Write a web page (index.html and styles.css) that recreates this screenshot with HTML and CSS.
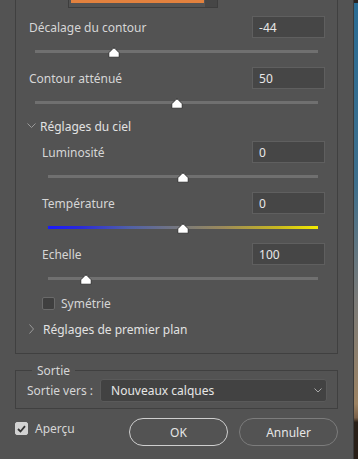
FILE: index.html
```html
<!DOCTYPE html>
<html lang="fr">
<head>
    <meta charset="UTF-8">
    <meta name="viewport" content="width=device-width, initial-scale=1.0">
    <title>Remplacement du ciel</title>
    <link rel="stylesheet" href="styles.css">
</head>
<body>
    <div class="page">
        <div class="main">
            <div class="settings">
                <div class="preview">
                    <div class="swatch"></div>
                    <div class="scroll"></div>
                </div>

                <div class="row">
                    <span>Décalage du contour</span>
                    <input type="text" class="field" value="-44">
                </div>
                <div class="slider">
                    <div class="track"></div>
                    <svg class="thumb" style="left: 28%" width="12" height="11" viewBox="0 0 12 11"><path d="M5.1 1.4 Q6 0.5 6.9 1.4 L11.2 5.8 L11.2 10.2 L0.8 10.2 L0.8 5.8 Z" fill="#fff" stroke="#222" stroke-width="0.8"/></svg>
                </div>

                <div class="row">
                    <span>Contour atténué</span>
                    <input type="text" class="field" value="50">
                </div>
                <div class="slider">
                    <div class="track"></div>
                    <svg class="thumb" style="left: 50%" width="12" height="11" viewBox="0 0 12 11"><path d="M5.1 1.4 Q6 0.5 6.9 1.4 L11.2 5.8 L11.2 10.2 L0.8 10.2 L0.8 5.8 Z" fill="#fff" stroke="#222" stroke-width="0.8"/></svg>
                </div>

                <div class="section-title">
                    <svg width="9" height="6" viewBox="0 0 9 6"><polyline points="0.5,0.5 4.5,4.5 8.5,0.5" fill="none" stroke="#9a9a9a" stroke-width="1"/></svg>
                    <span>Réglages du ciel</span>
                </div>

                <div class="sub">
                    <div class="row">
                        <span>Luminosité</span>
                        <input type="text" class="field" value="0">
                    </div>
                    <div class="slider">
                        <div class="track"></div>
                        <svg class="thumb" style="left: 50%" width="12" height="11" viewBox="0 0 12 11"><path d="M5.1 1.4 Q6 0.5 6.9 1.4 L11.2 5.8 L11.2 10.2 L0.8 10.2 L0.8 5.8 Z" fill="#fff" stroke="#222" stroke-width="0.8"/></svg>
                    </div>

                    <div class="row">
                        <span>Température</span>
                        <input type="text" class="field" value="0">
                    </div>
                    <div class="slider">
                        <div class="track temp"></div>
                        <svg class="thumb" style="left: 50%" width="12" height="11" viewBox="0 0 12 11"><path d="M5.1 1.4 Q6 0.5 6.9 1.4 L11.2 5.8 L11.2 10.2 L0.8 10.2 L0.8 5.8 Z" fill="#fff" stroke="#222" stroke-width="0.8"/></svg>
                    </div>

                    <div class="row">
                        <span>Echelle</span>
                        <input type="text" class="field" value="100">
                    </div>
                    <div class="slider">
                        <div class="track"></div>
                        <svg class="thumb" style="left: 14%" width="12" height="11" viewBox="0 0 12 11"><path d="M5.1 1.4 Q6 0.5 6.9 1.4 L11.2 5.8 L11.2 10.2 L0.8 10.2 L0.8 5.8 Z" fill="#fff" stroke="#222" stroke-width="0.8"/></svg>
                    </div>

                    <label class="check">
                        <span class="box"></span>
                        <span>Symétrie</span>
                    </label>
                </div>

                <div class="section-title closed">
                    <svg width="6" height="10" viewBox="0 0 6 10"><polyline points="0.5,0.5 4.5,5 0.5,9.5" fill="none" stroke="#9a9a9a" stroke-width="1"/></svg>
                    <span>Réglages de premier plan</span>
                </div>
            </div>

            <fieldset class="output">
                <legend>Sortie</legend>
                <div class="output-row">
                    <span class="output-label">Sortie vers :</span>
                    <div class="select">
                        <span>Nouveaux calques</span>
                        <svg width="8" height="5" viewBox="0 0 8 5"><polyline points="0.5,0.5 4,4 7.5,0.5" fill="none" stroke="#a8a8a8" stroke-width="1"/></svg>
                    </div>
                </div>
            </fieldset>

            <div class="footer">
                <label class="check preview-check">
                    <span class="box checked">
                        <svg width="9" height="8" viewBox="0 0 9 8"><polyline points="1,4 3.5,6.5 8,1.2" fill="none" stroke="#333" stroke-width="1.8"/></svg>
                    </span>
                    <span>Aperçu</span>
                </label>
                <div class="buttons">
                    <button class="btn primary">OK</button>
                    <button class="btn">Annuler</button>
                </div>
            </div>
        </div>
        <div class="edge"></div>
    </div>
</body>
</html>
```

FILE: styles.css
```css
body {
    margin: 0;
    background: #535353;
    font-family: "Noto Sans", "Open Sans", sans-serif;
    font-size: 12px;
    color: #d6d6d6;
    overflow: hidden;
}
.page {
    display: flex;
    height: 459px;
}
.main {
    width: 324px;
    padding: 0 15px;
}
.edge {
    width: 4px;
    border-left: 1px solid #3a3a3a;
    background: linear-gradient(to bottom, #2a2320 0, #2a2320 3px, #2a6c94 3px, #3e6f8c 40%, #7a7a78 65%, #9c8262 88%, #7a6048 91%, #2a2018 92%, #2a2018 100%);
}
.settings {
    height: 353px;
    border: 1px solid #404040;
    border-top: none;
    padding: 0 12px 0 13px;
}
.preview {
    display: flex;
    justify-content: space-between;
    width: 148px;
    height: 7px;
    margin-left: 39px;
    margin-bottom: 8px;
    border: 1px solid #3d3d3d;
    border-top: none;
}
.swatch {
    width: 133px;
    height: 3px;
    margin-left: 2px;
    background: #e2813e;
}
.scroll {
    width: 12px;
    background: #464646;
}
.row {
    display: flex;
    justify-content: space-between;
    align-items: center;
    height: 22px;
}
.field {
    box-sizing: border-box;
    width: 73px;
    height: 22px;
    margin: 0;
    padding: 0 6px;
    background: #464646;
    border: 1px solid #5f5f5f;
    color: #e8e8e8;
    font-family: inherit;
    font-size: 12px;
    outline: none;
}
.slider {
    position: relative;
    height: 29px;
    margin: 0 7px 0 6px;
}
.track {
    position: absolute;
    left: 0;
    right: 0;
    top: 12px;
    height: 3px;
    background: #707070;
}
.track.temp {
    background: linear-gradient(to right, #1a1aff 0, #2a2ad8 12%, #5060a8 30%, #7a7a7a 50%, #9c8a5a 65%, #c8b820 85%, #f4ec00 100%);
}
.thumb {
    position: absolute;
    top: 9px;
    margin-left: -6px;
}
.section-title {
    display: flex;
    align-items: center;
    height: 16px;
    margin-bottom: 7px;
    color: #e2e2e2;
}
.section-title svg {
    margin: 0 4px 0 -2px;
}
.section-title.closed {
    margin-top: 8px;
    margin-bottom: 0;
}
.section-title.closed svg {
    margin: 0 8px 0 0;
}
.sub {
    padding-left: 13px;
}
.check {
    display: flex;
    align-items: center;
    height: 19px;
}
.box {
    box-sizing: border-box;
    width: 13px;
    height: 13px;
    margin-right: 6px;
    border: 1px solid #6a6a6a;
    border-radius: 2px;
    background: #3f3f3f;
}
.box.checked {
    display: flex;
    align-items: center;
    justify-content: center;
    background: #d2d2d2;
    border-color: #d2d2d2;
    margin-right: 7px;
}
.output {
    margin: 8px 0 0;
    padding: 0 10px 6px 11px;
    border: 1px solid #404040;
    min-width: 0;
}
.output legend {
    margin-left: 5px;
    padding: 0 5px;
    color: #d6d6d6;
}
.output-row {
    display: flex;
    align-items: center;
    gap: 7px;
}
.select {
    flex: 1;
    display: flex;
    justify-content: space-between;
    align-items: center;
    box-sizing: border-box;
    height: 23px;
    padding: 0 4px 0 10px;
    background: #424242;
    border: 1px solid #5a5a5a;
    border-radius: 3px;
    color: #e6e6e6;
}
.footer {
    display: flex;
    justify-content: space-between;
    margin-top: 9px;
}
.preview-check {
    align-self: flex-start;
    margin-top: 1px;
}
.buttons {
    display: flex;
    gap: 11px;
}
.btn {
    width: 99px;
    height: 28px;
    padding: 0;
    background: transparent;
    border: 1px solid #7c7c7c;
    border-radius: 14px;
    color: #e6e6e6;
    font-family: inherit;
    font-size: 12px;
}
.btn.primary {
    border-color: #cfcfcf;
}
```
